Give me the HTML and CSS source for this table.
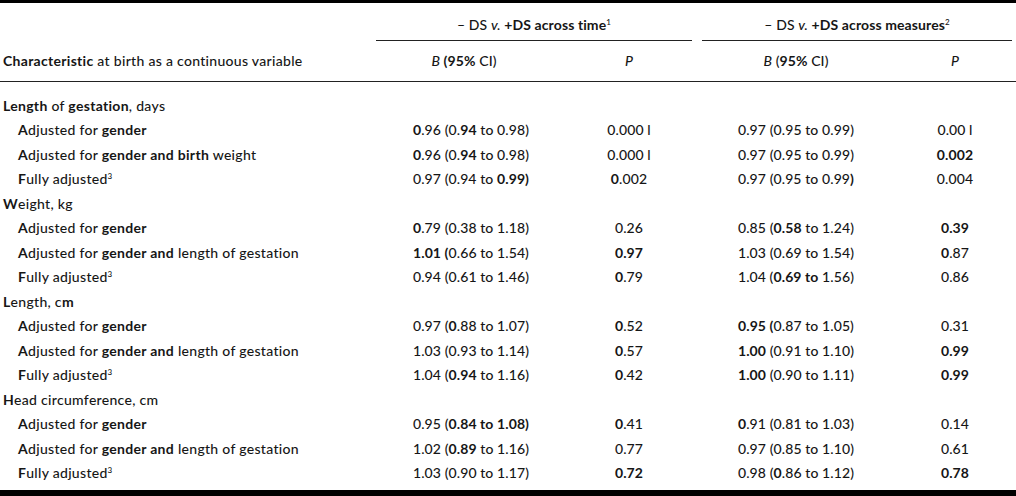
FILE: index.html
```html
<!DOCTYPE html>
<html>
<head>
<meta charset="utf-8">
<link rel="stylesheet" href="styles.css">
</head>
<body>
<table class="stats">
  <colgroup>
    <col class="c-label">
    <col class="c-b1">
    <col class="c-p1">
    <col class="c-b2">
    <col class="c-p2">
  </colgroup>
  <thead>
    <tr class="group-row">
      <th class="blank"></th>
      <th colspan="2" class="group"><div class="group-inner g1">– DS <i>v.</i> <b>+DS across time</b><sup>1</sup></div></th>
      <th colspan="2" class="group"><div class="group-inner g2">– DS <i>v.</i> <b>+DS across measures</b><sup>2</sup></div></th>
    </tr>
    <tr class="col-row">
      <th class="label-h"><b>Characteristic</b> at birth as a continuous variable</th>
      <th class="num-h b1h"><i>B</i> <b>(95%</b> CI)</th>
      <th class="num-h"><i>P</i></th>
      <th class="num-h b2h"><i>B</i> (<b>95%</b> CI)</th>
      <th class="num-h p2h"><i>P</i></th>
    </tr>
  </thead>
  <tbody>
    <tr class="section first"><td><b>Length</b> of <b>gestation</b>, days</td><td></td><td></td><td></td><td></td></tr>
    <tr><td class="sub"><b>A</b>djusted for <b>gender</b></td><td><b>0</b>.96 (0.<b>94</b> to 0.98)</td><td>0.000 l</td><td>0.97 (0.95 to 0.99)</td><td>0.00 l</td></tr>
    <tr><td class="sub"><b>A</b>djusted for <b>gender and birth</b> weight</td><td><b>0</b>.96 (0.<b>94</b> to 0.98)</td><td>0.000 l</td><td>0.97 (0.95 to 0.99)</td><td><b>0.002</b></td></tr>
    <tr><td class="sub"><b>F</b>ully adjusted<sup>3</sup></td><td>0.97 (0.94 to <b>0.99)</b></td><td><b>0</b>.002</td><td>0.97 (0.95 to 0.99<b>)</b></td><td>0.004</td></tr>
    <tr class="section"><td><b>W</b>eight, kg</td><td></td><td></td><td></td><td></td></tr>
    <tr><td class="sub"><b>A</b>djusted for <b>gender</b></td><td><b>0</b>.79 (0.38 to 1.18)</td><td>0.26</td><td>0.85 (<b>0.58</b> to 1.24)</td><td><b>0.39</b></td></tr>
    <tr><td class="sub"><b>A</b>djusted for <b>gender and</b> length of gestation</td><td><b>1.01 (</b>0.66 to 1.54)</td><td><b>0.97</b></td><td>1.03 (0.69 to 1.54)</td><td><b>0</b>.87</td></tr>
    <tr><td class="sub"><b>F</b>ully adjusted<sup>3</sup></td><td>0.94 (0.61 to 1.46)</td><td><b>0</b>.79</td><td>1.04 (<b>0.69 to</b> 1.56)</td><td>0.86</td></tr>
    <tr class="section"><td><b>L</b>ength, c<b>m</b></td><td></td><td></td><td></td><td></td></tr>
    <tr><td class="sub"><b>A</b>djusted for <b>gender</b></td><td>0.97 (<b>0</b>.88 to 1.07)</td><td><b>0</b>.52</td><td><b>0.95 (</b>0.87 to 1.05)</td><td>0.31</td></tr>
    <tr><td class="sub"><b>A</b>djusted for <b>gender and</b> length of gestation</td><td>1.03 (0.93 to 1.14)</td><td><b>0</b>.57</td><td><b>1.00</b> (0.91 to 1.10)</td><td><b>0.99</b></td></tr>
    <tr><td class="sub"><b>F</b>ully adjusted<sup>3</sup></td><td>1.04 (<b>0.94</b> to 1.16)</td><td><b>0</b>.42</td><td><b>1.00</b> (0.90 to 1.11)</td><td><b>0.99</b></td></tr>
    <tr class="section"><td><b>H</b>ead circumference, cm</td><td></td><td></td><td></td><td></td></tr>
    <tr><td class="sub"><b>A</b>djusted for <b>gender</b></td><td>0.95 (<b>0.84 to 1.08)</b></td><td><b>0</b>.41</td><td><b>0</b>.91 (0.81 to 1.03)</td><td>0.14</td></tr>
    <tr><td class="sub"><b>A</b>djusted for <b>gender and</b> length of gestation</td><td>1.02 (<b>0.89</b> to 1.16)</td><td>0.77</td><td>0.97 (0.85 to 1.10)</td><td>0.61</td></tr>
    <tr class="last"><td class="sub"><b>F</b>ully adjusted<sup>3</sup></td><td>1.03 (0.90 to 1.17)</td><td><b>0.72</b></td><td>0.98 (<b>0</b>.86 to 1.12)</td><td><b>0.78</b></td></tr>
  </tbody>
</table>
</body>
</html>
```

FILE: styles.css
```css
html, body {
  margin: 0;
  padding: 0;
  background: #fff;
}

body {
  font-family: "Lato", "Open Sans", sans-serif;
  font-size: 14px;
  font-weight: 500;
  color: #161616;
}

.stats {
  width: 1016px;
  border-collapse: collapse;
  border-top: 3px solid #000;
  border-bottom: 6px solid #000;
}

.c-label { width: 376px; }
.c-b1 { width: 190px; }
.c-p1 { width: 126px; }
.c-b2 { width: 208px; }
.c-p2 { width: 116px; }

b { font-weight: 700; }
i { font-style: italic; }

sup {
  font-size: 8px;
  line-height: 0;
  vertical-align: 5px;
}

td, th {
  letter-spacing: 0.1px;
}

td:first-child, .label-h {
  letter-spacing: 0.3px;
}

th {
  font-weight: 500;
  padding: 0;
}

.group-row th {
  height: 38px;
  vertical-align: top;
}

.group-inner {
  text-align: center;
  padding-top: 13px;
  padding-bottom: 7px;
  border-bottom: 1.5px solid #222;
}

.group-inner.g2 {
  margin-left: 10px;
  margin-right: 4px;
}

.col-row th {
  height: 39px;
  border-bottom: 1.5px solid #222;
  text-align: center;
  padding-bottom: 1px;
}

.col-row .label-h {
  text-align: left;
  padding-left: 3px;
}

.col-row .b1h { padding-right: 14px; }
.col-row .p2h { padding-right: 6px; }

td {
  padding: 0;
  height: 24.5px;
  text-align: center;
  white-space: nowrap;
}

td:first-child {
  text-align: left;
  padding-left: 3px;
}

td.sub {
  padding-left: 18px;
}

tr.first td {
  height: 24.5px;
  padding-top: 11px;
}

tr.last td {
  padding-bottom: 5px;
}

td:nth-child(5) { padding-right: 6px; }
```
